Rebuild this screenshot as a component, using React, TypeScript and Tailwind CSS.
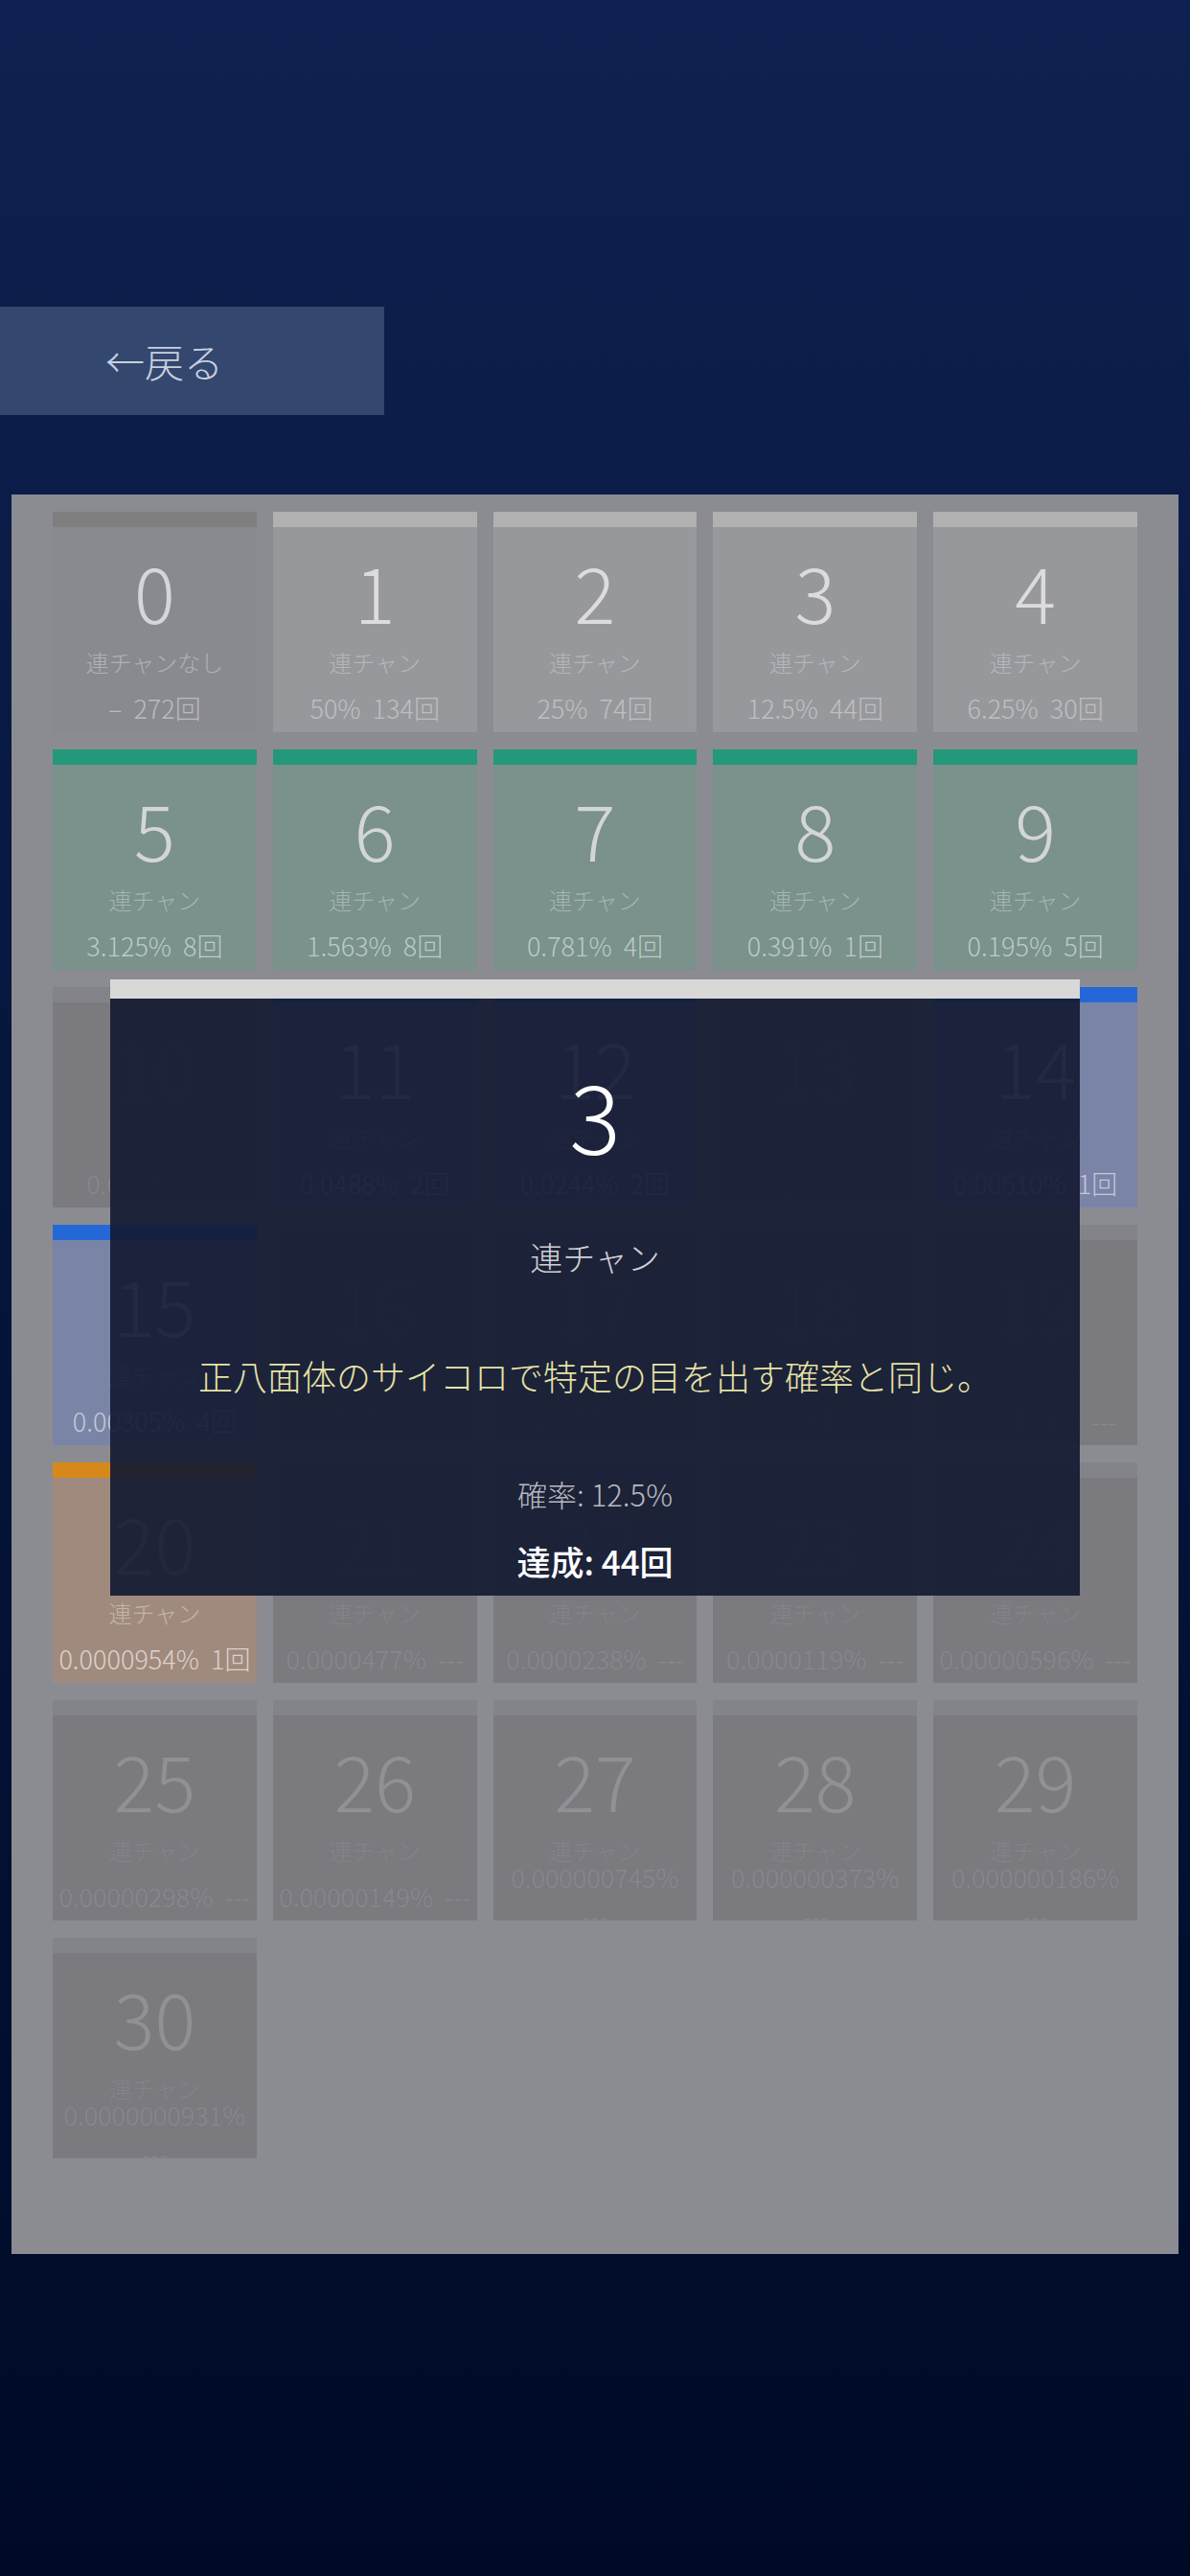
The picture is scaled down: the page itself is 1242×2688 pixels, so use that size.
type Tier = "zero" | "low" | "teal" | "blue" | "orange" | "empty";

type Cell = {
  n: number;
  pct: string;
  cnt: string;
  tier: Tier;
  wrap?: boolean;
};

const tierStyle: Record<Tier, { bg: string; bar: string; num: string; label: string; stats: string }> = {
  zero: { bg: "bg-[#888a8f]", bar: "bg-[#7f7f7f]", num: "text-[#d6d6d8]", label: "text-[#b0b1b4]", stats: "text-[#babbbe]" },
  low: { bg: "bg-[#97989c]", bar: "bg-[#b1b1b1]", num: "text-[#dcdcde]", label: "text-[#b5b6b9]", stats: "text-[#bebfc2]" },
  teal: { bg: "bg-[#7a918c]", bar: "bg-[#23987b]", num: "text-[#d4d6d6]", label: "text-[#a4b4b1]", stats: "text-[#bccac7]" },
  blue: { bg: "bg-[#7a84a6]", bar: "bg-[#2468d8]", num: "text-[#d0d2dc]", label: "text-[#a8aec6]", stats: "text-[#c4c8d8]" },
  orange: { bg: "bg-[#a08a7e]", bar: "bg-[#d6891a]", num: "text-[#cfc4be]", label: "text-[#c4b4aa]", stats: "text-[#ddd2cb]" },
  empty: { bg: "bg-[#7a7a7f]", bar: "bg-[#838489]", num: "text-[#909095]", label: "text-[#848489]", stats: "text-[#88888d]" },
};

const cells: Cell[] = [
  { n: 0, pct: "–", cnt: "272回", tier: "zero" },
  { n: 1, pct: "50%", cnt: "134回", tier: "low" },
  { n: 2, pct: "25%", cnt: "74回", tier: "low" },
  { n: 3, pct: "12.5%", cnt: "44回", tier: "low" },
  { n: 4, pct: "6.25%", cnt: "30回", tier: "low" },
  { n: 5, pct: "3.125%", cnt: "8回", tier: "teal" },
  { n: 6, pct: "1.563%", cnt: "8回", tier: "teal" },
  { n: 7, pct: "0.781%", cnt: "4回", tier: "teal" },
  { n: 8, pct: "0.391%", cnt: "1回", tier: "teal" },
  { n: 9, pct: "0.195%", cnt: "5回", tier: "teal" },
  { n: 10, pct: "0.0977%", cnt: "---", tier: "empty" },
  { n: 11, pct: "0.0488%", cnt: "2回", tier: "blue" },
  { n: 12, pct: "0.0244%", cnt: "2回", tier: "blue" },
  { n: 13, pct: "0.0122%", cnt: "---", tier: "empty" },
  { n: 14, pct: "0.00610%", cnt: "1回", tier: "blue" },
  { n: 15, pct: "0.00305%", cnt: "4回", tier: "blue" },
  { n: 16, pct: "0.00153%", cnt: "---", tier: "empty" },
  { n: 17, pct: "0.000763%", cnt: "---", tier: "empty" },
  { n: 18, pct: "0.000381%", cnt: "---", tier: "empty" },
  { n: 19, pct: "0.000191%", cnt: "---", tier: "empty" },
  { n: 20, pct: "0.0000954%", cnt: "1回", tier: "orange" },
  { n: 21, pct: "0.0000477%", cnt: "---", tier: "empty" },
  { n: 22, pct: "0.0000238%", cnt: "---", tier: "empty" },
  { n: 23, pct: "0.0000119%", cnt: "---", tier: "empty" },
  { n: 24, pct: "0.00000596%", cnt: "---", tier: "empty" },
  { n: 25, pct: "0.00000298%", cnt: "---", tier: "empty" },
  { n: 26, pct: "0.00000149%", cnt: "---", tier: "empty" },
  { n: 27, pct: "0.000000745%", cnt: "---", tier: "empty", wrap: true },
  { n: 28, pct: "0.000000373%", cnt: "---", tier: "empty", wrap: true },
  { n: 29, pct: "0.000000186%", cnt: "---", tier: "empty", wrap: true },
  { n: 30, pct: "0.0000000931%", cnt: "---", tier: "empty", wrap: true },
];

function StreakCard({ cell }: { cell: Cell }) {
  const s = tierStyle[cell.tier];
  return (
    <div className={`h-[230px] flex flex-col overflow-hidden font-light ${s.bg}`}>
      <div className={`h-[16px] shrink-0 ${s.bar}`} />
      <div className={`mt-[26px] h-[80px] shrink-0 text-center text-[80px] leading-[80px] ${s.num}`}>{cell.n}</div>
      <div className={`mt-[17px] h-[36px] shrink-0 text-center text-[24px] leading-[36px] whitespace-nowrap ${s.label}`}>
        {cell.n === 0 ? "連チャンなし" : "連チャン"}
      </div>
      <div className={`mt-[10px] h-[40px] shrink-0 flex flex-col justify-center items-center text-[27px] leading-[40px] whitespace-nowrap ${s.stats}`}>
        {cell.wrap ? (
          <>
            <div>{cell.pct}</div>
            <div>{cell.cnt}</div>
          </>
        ) : (
          <div>
            <span>{cell.pct}</span>
            <span className="ml-[12px]">{cell.cnt}</span>
          </div>
        )}
      </div>
    </div>
  );
}

export default function App() {
  return (
    <div className="relative w-[1242px] h-[2688px] overflow-hidden bg-gradient-to-b from-[#0f2150] to-[#000a26] font-['Noto_Sans_CJK_JP','Noto_Sans',sans-serif]">
      <div className="pt-[320px]">
        {/* 戻るボタン */}
        <button className="w-[401px] h-[113px] flex items-center pl-[110px] bg-[#34476f] text-[41px] font-light text-[#c8d0e0]">
          ←戻る
        </button>

        {/* 連チャン一覧 */}
        <div className="mt-[83px] mx-[12px] bg-[#8b8c91] pt-[18px] px-[43px] pb-[100px]">
          <div className="grid grid-cols-5 gap-x-[17px] gap-y-[18px]">
            {cells.map((c) => (
              <StreakCard key={c.n} cell={c} />
            ))}
          </div>
        </div>
      </div>

      {/* 詳細モーダル */}
      <div className="absolute left-[115px] top-[1022px] w-[1012px] h-[643px] flex flex-col items-center bg-[rgba(20,26,50,0.92)]">
        <div className="w-full h-[20px] bg-[#d8d8d8]" />
        <div className="mt-[70px] h-[100px] text-[100px] leading-[100px] font-light text-white">3</div>
        <div className="mt-[76px] h-[48px] text-[34px] leading-[48px] font-light text-[#d0d0d4]">連チャン</div>
        <div className="mt-[74px] h-[50px] text-[36px] leading-[50px] font-light text-[#e6e2a6]">
          正八面体のサイコロで特定の目を出す確率と同じ。
        </div>
        <div className="mt-[77px] h-[44px] text-[31px] leading-[44px] font-light text-[#b8b9be]">確率: 12.5%</div>
        <div className="mt-[23px] h-[50px] text-[35px] leading-[50px] font-medium text-white">達成: 44回</div>
      </div>
    </div>
  );
}
